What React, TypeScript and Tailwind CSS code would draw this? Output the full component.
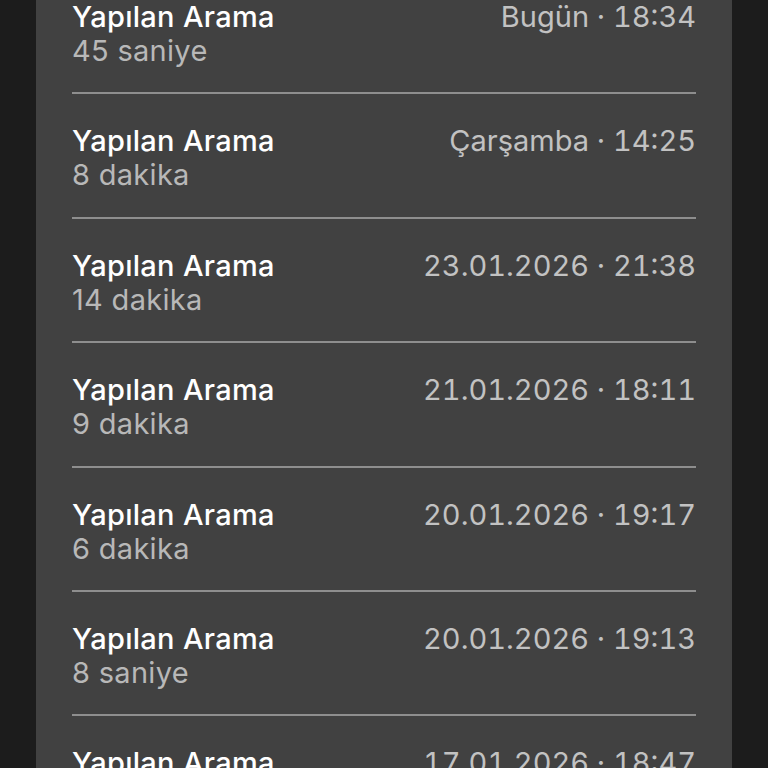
const CALLS = [
  { title: 'Yapılan Arama', detail: '45 saniye', when: 'Bugün · 18:34' },
  { title: 'Yapılan Arama', detail: '8 dakika', when: 'Çarşamba · 14:25' },
  { title: 'Yapılan Arama', detail: '14 dakika', when: '23.01.2026 · 21:38' },
  { title: 'Yapılan Arama', detail: '9 dakika', when: '21.01.2026 · 18:11' },
  { title: 'Yapılan Arama', detail: '6 dakika', when: '20.01.2026 · 19:17' },
  { title: 'Yapılan Arama', detail: '8 saniye', when: '20.01.2026 · 19:13' },
  { title: 'Yapılan Arama', detail: '3 dakika', when: '17.01.2026 · 18:47' },
];

export default function App() {
  return (
    <div
      className="h-[768px] w-[768px] overflow-hidden bg-[#1c1c1c]"
      style={{ fontFamily: 'Inter, "Noto Sans", sans-serif' }}
    >
      <div className="mx-[36px] h-full overflow-hidden bg-[#414141]">
        <div className="-mt-[30px] px-[36px]">
          {CALLS.map((c, i) => (
            <div key={i} className="border-b-2 border-[#8e8e8e] pt-[30px] pb-[24.4px]">
              <div className="flex items-center justify-between">
                <p className="text-[29px] leading-[34px] font-medium text-white tracking-[0.3px]">{c.title}</p>
                <p className="text-[29px] leading-[34px] text-[#c2c2c2] tabular-nums">{c.when}</p>
              </div>
              <p className="text-[29px] leading-[34px] text-[#b8b8b8] tracking-[0.3px]">{c.detail}</p>
            </div>
          ))}
        </div>
      </div>
    </div>
  );
}
